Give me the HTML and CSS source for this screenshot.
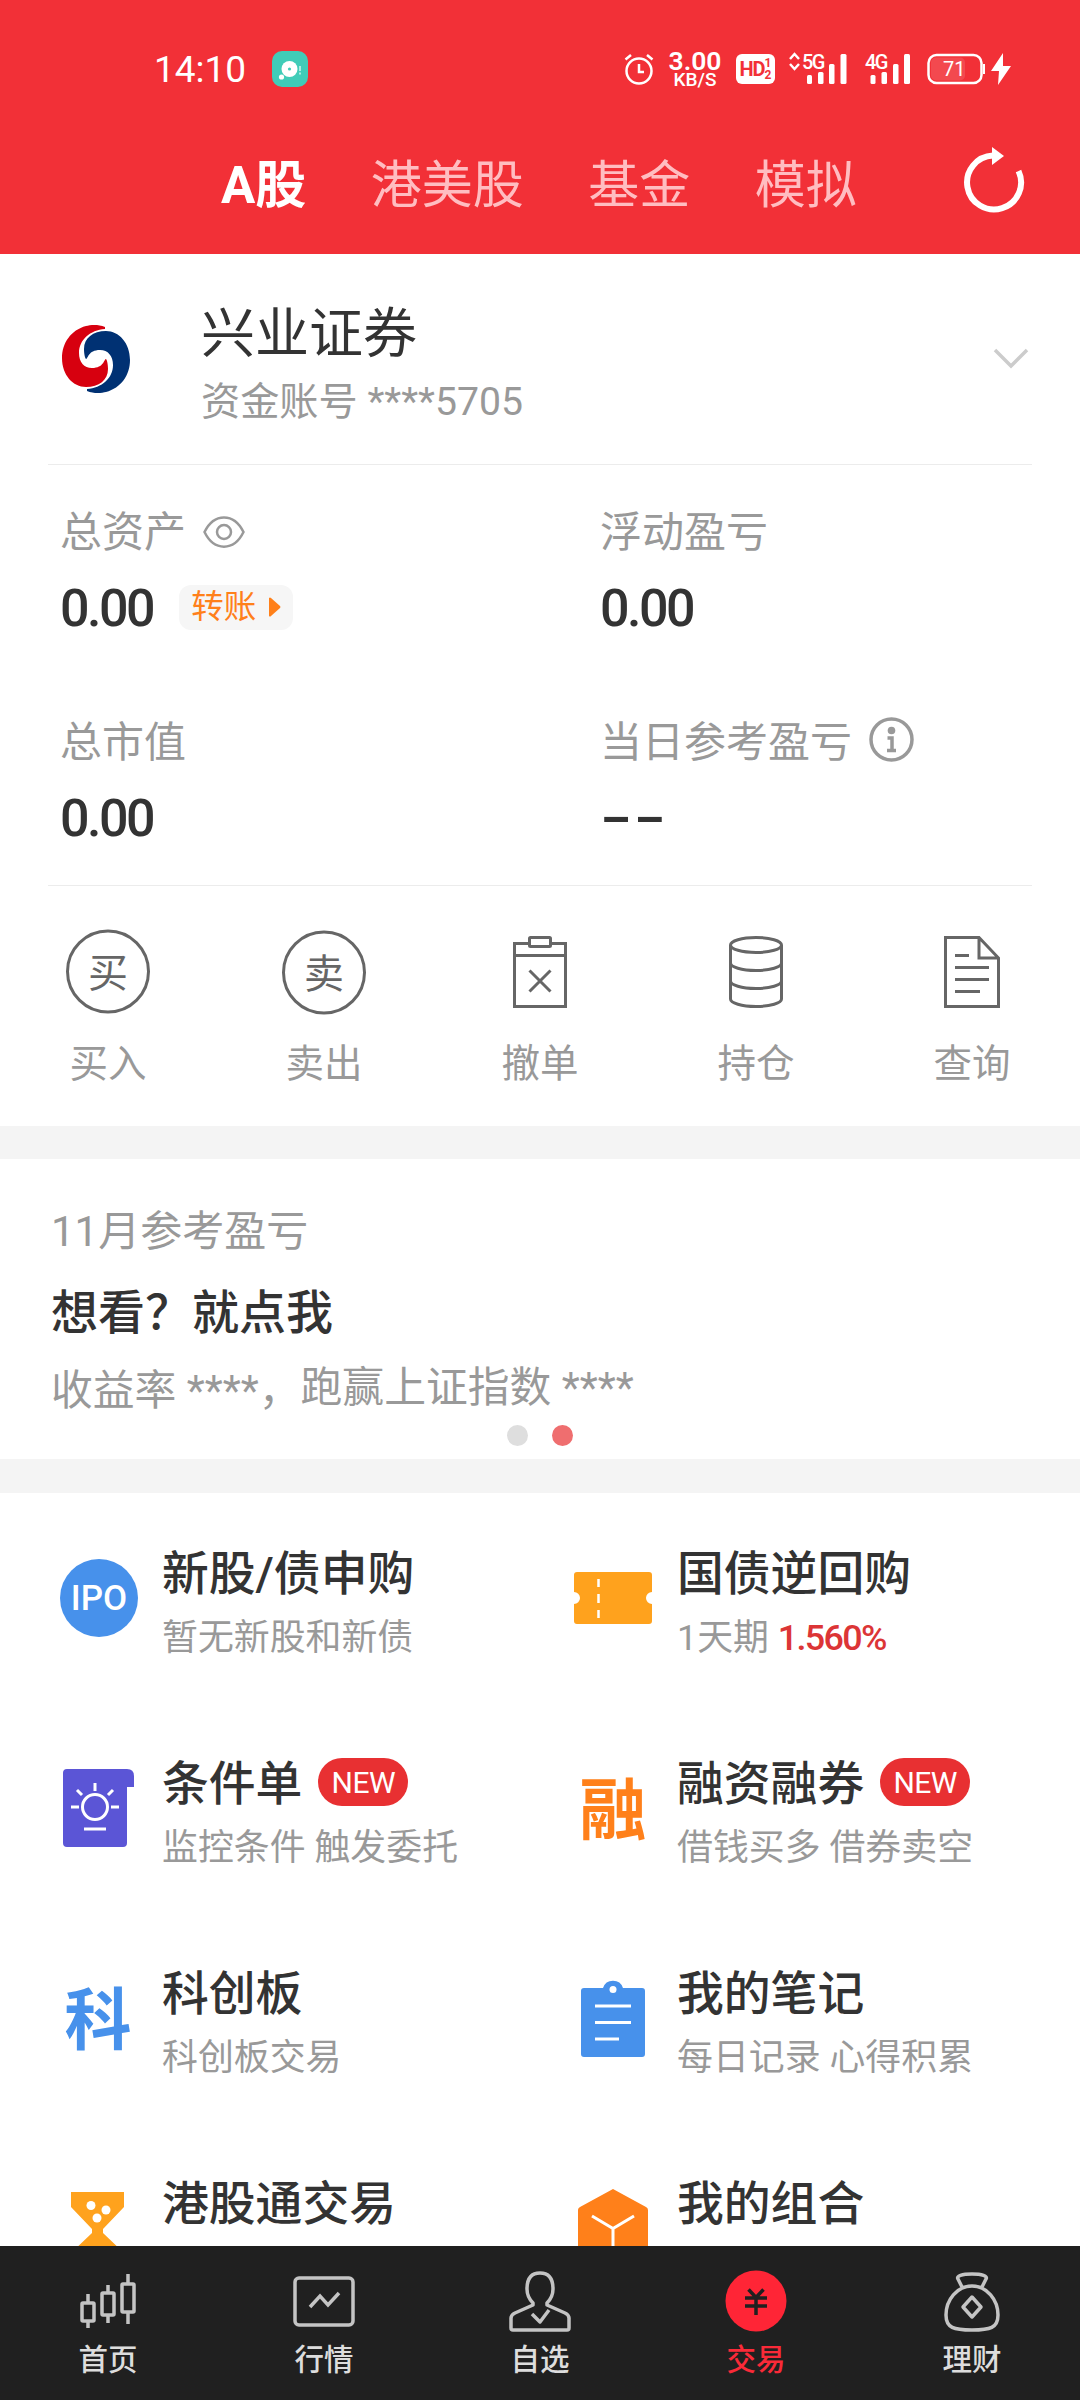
FILE: index.html
```html
<!DOCTYPE html>
<html lang="zh-CN">
<head>
    <meta charset="UTF-8">
    <meta name="viewport" content="width=device-width, initial-scale=1.0">
    <title>交易</title>
    <link rel="stylesheet" href="styles.css">
</head>
<body>
    <div class="container">
        <div class="header">
            <div class="status-bar">
                <span class="time">14:10</span>
                <svg class="app-icon" width="36" height="36" viewBox="0 0 36 36">
                    <rect width="36" height="36" rx="10" fill="#40ccb8"/>
                    <circle cx="17.5" cy="18" r="8" fill="#fff"/>
                    <circle cx="17.5" cy="18" r="1.6" fill="#40ccb8"/>
                    <circle cx="9.5" cy="26" r="2.6" fill="#fff"/>
                    <path d="M28 15v5M28 21.500v2" stroke="#d5f5ef" stroke-width="1.500"/>
                </svg>
                <svg class="alarm" width="30" height="32" viewBox="0 0 30 32" fill="none" stroke="#fff" stroke-width="2.500">
                    <circle cx="15" cy="18" r="12.500"/>
                    <path d="M1.500 6.500L7 2M28.500 6.500L23 2M15 11v8h5"/>
                </svg>
                <div class="speed"><b>3.00</b><span>KB/S</span></div>
                <div class="hd"><span>HD</span><i>1<br>2</i></div>
                <svg class="signal-5g" width="58" height="32" viewBox="0 0 58 32" fill="#fff">
                    <path d="M0 6l4.500-5L9 6M0 11l4.500 5L9 11" fill="none" stroke="#fff" stroke-width="2.500"/>
                    <text x="12" y="16" class="net">5G</text>
                    <rect x="17" y="22" width="5" height="9" rx="1.500"/>
                    <rect x="28" y="19" width="5.500" height="12" rx="1.500"/>
                    <rect x="39" y="11" width="5.500" height="20" rx="1.500"/>
                    <rect x="50.500" y="1" width="6" height="30" rx="1.500"/>
                </svg>
                <svg class="signal-4g" width="46" height="32" viewBox="0 0 46 32" fill="#fff">
                    <text x="0" y="16" class="net">4G</text>
                    <rect x="5.500" y="22" width="5" height="9" rx="1.500"/>
                    <rect x="16.500" y="19" width="5.500" height="12" rx="1.500"/>
                    <rect x="28" y="11" width="5.500" height="20" rx="1.500"/>
                    <rect x="39" y="1" width="6" height="30" rx="1.500"/>
                </svg>
                <svg class="battery" width="84" height="32" viewBox="0 0 84 32">
                    <rect x="1.500" y="2" width="53" height="28" rx="8" fill="none" stroke="#fff" stroke-width="2.500"/>
                    <rect x="4" y="4.500" width="34" height="23" rx="5" fill="#fff" opacity=".12"/>
                    <path d="M56 11h2v10h-2z" fill="#fff"/>
                    <text x="16" y="23" class="level">71</text>
                    <path d="M76 0L64 18h8l-1 14 13-19h-8z" fill="#fff"/>
                </svg>
            </div>
            <div class="tabs">
                <a class="tab active">A股</a>
                <a class="tab">港美股</a>
                <a class="tab">基金</a>
                <a class="tab">模拟</a>
                <svg class="refresh" width="62" height="70" viewBox="0 0 62 70">
                    <path d="M31 8.500A27 27 0 1 0 56.500 24" fill="none" stroke="#fff" stroke-width="6"/>
                    <path d="M30 0L42 9 30 18z" fill="#fff"/>
                </svg>
            </div>
        </div>

        <div class="account">
            <svg class="logo" width="68" height="68" viewBox="0 0 68 68">
                <path d="M43 2C36-1 28 0 24 1 9 5 0 18 0 33c0 17 11 29 24 29s22-7 22-18c0-5-1-9-2-10-2 0-2 9-14 9-8 0-13-6-13-15C17 15 28 5 43 4z" fill="#d7000f"/>
                <path d="M43 2C36-1 28 0 24 1 9 5 0 18 0 33c0 17 11 29 24 29s22-7 22-18c0-5-1-9-2-10-2 0-2 9-14 9-8 0-13-6-13-15C17 15 28 5 43 4z" fill="#003173" transform="rotate(180 34 34)"/>
            </svg>
            <div class="account-info">
                <div class="broker">兴业证券</div>
                <div class="number">资金账号 ****5705</div>
            </div>
            <svg width="36" height="22" viewBox="0 0 36 22"><path d="M2 2l16 16L34 2" fill="none" stroke="#ccc" stroke-width="3.500"/></svg>
        </div>

        <div class="assets">
            <div class="asset">
                <div class="label">总资产
                    <svg class="eye" width="42" height="32" viewBox="0 0 42 32" fill="none" stroke="#999" stroke-width="2.500"><path d="M1.500 16C11-3.500 31-3.500 40.500 16 31 35.500 11 35.500 1.500 16z"/><circle cx="21" cy="16" r="7"/></svg>
                </div>
                <div class="value">0.00
                    <span class="transfer">转账<svg width="12" height="20" viewBox="0 0 12 20"><path d="M0 1q1-1 2 0l9 8q1 1 0 2l-9 8q-1 1-2 0z" fill="#ff801a"/></svg></span>
                </div>
            </div>
            <div class="asset">
                <div class="label">浮动盈亏</div>
                <div class="value">0.00</div>
            </div>
            <div class="asset">
                <div class="label">总市值</div>
                <div class="value">0.00</div>
            </div>
            <div class="asset">
                <div class="label">当日参考盈亏
                    <svg class="info" width="45" height="45" viewBox="0 0 45 45"><circle cx="22.500" cy="22.500" r="20.500" fill="none" stroke="#999" stroke-width="3.500"/><circle cx="22.500" cy="13.500" r="3.800" fill="#999"/><path d="M18.500 21h4.500v12M18 33.500h9" fill="none" stroke="#999" stroke-width="3.500"/></svg>
                </div>
                <div class="value dashes">--</div>
            </div>
        </div>

        <div class="actions">
            <a class="action">
                <svg width="86" height="86" viewBox="0 0 86 86"><circle cx="43" cy="42.500" r="40.500" fill="none" stroke="#666" stroke-width="3"/><text x="43" y="58" class="glyph">买</text></svg>
                <span>买入</span>
            </a>
            <a class="action">
                <svg width="86" height="86" viewBox="0 0 86 86"><circle cx="43" cy="43.500" r="40.500" fill="none" stroke="#666" stroke-width="3"/><text x="43" y="58.500" class="glyph">卖</text></svg>
                <span>卖出</span>
            </a>
            <a class="action">
                <svg width="54" height="72" viewBox="0 0 54 72" fill="none" stroke="#666" stroke-width="3"><path d="M16 7.500H1.500v63h51v-63H38M1.500 19.500h51"/><rect x="16.500" y="1.500" width="21" height="9" rx="1"/><path d="M16.500 34.500l21 21M37.500 34.500l-21 21"/></svg>
                <span>撤单</span>
            </a>
            <a class="action">
                <svg width="54" height="72" viewBox="0 0 54 72" fill="none" stroke="#666" stroke-width="3"><ellipse cx="27" cy="9" rx="25.500" ry="7.500"/><path d="M1.500 9v54c0 4 11 7.500 25.500 7.500s25.500-3.500 25.500-7.500V9M1.500 27c0 4 11 7.500 25.500 7.500S52.500 31 52.500 27M1.500 45c0 4 11 7.500 25.500 7.500S52.500 49 52.500 45"/></svg>
                <span>持仓</span>
            </a>
            <a class="action">
                <svg width="56" height="72" viewBox="0 0 56 72" fill="none" stroke="#666" stroke-width="3"><path d="M1.500 1.500H35L54.500 22v48.500h-53zM35 1.500V22h19.500M11 19.500h14M11 31.500h34M11 43.500h34M11 55.500h25"/></svg>
                <span>查询</span>
            </a>
        </div>

        <div class="banner">
            <div class="banner-title">11月参考盈亏</div>
            <div class="banner-main">想看？就点我</div>
            <div class="banner-text"><span>收益率 ****，</span><span class="raised">跑赢上证指数 ****</span></div>
            <div class="dots"><i></i><i class="on"></i></div>
        </div>

        <div class="features">
            <div class="feature">
                <div class="icon"><div class="ipo">IPO</div></div>
                <div class="feature-text"><h3>新股/债申购</h3><p>暂无新股和新债</p></div>
            </div>
            <div class="feature">
                <div class="icon">
                    <svg width="78" height="52" viewBox="0 0 78 52"><path d="M3 0h72q3 0 3 3v17a6 6 0 0 0 0 12v17q0 3-3 3H3q-3 0-3-3V32a6 6 0 0 0 0-12V3q0-3 3-3z" fill="#ffa21d"/><path d="M24.500 7v8M24.500 22v9M24.500 38v8" stroke="#fff" stroke-width="2.500"/></svg>
                </div>
                <div class="feature-text"><h3>国债逆回购</h3><p>1天期 <em>1.560%</em></p></div>
            </div>
            <div class="feature">
                <div class="icon">
                    <svg width="71" height="78" viewBox="0 0 71 78"><path d="M4 0h60q7 0 7 7v11h-7v56q0 4-4 4H4q-4 0-4-4V4q0-4 4-4z" fill="#5b55d6"/><g fill="none" stroke="#fff" stroke-width="3"><circle cx="32" cy="38" r="12.500"/><path d="M32 14v8M14 21l5 5M50 21l-5 5M8 38h8M48 38h8M21 60h22"/></g></svg>
                </div>
                <div class="feature-text"><h3>条件单<span class="new">NEW</span></h3><p>监控条件 触发委托</p></div>
            </div>
            <div class="feature">
                <div class="icon char orange">融</div>
                <div class="feature-text"><h3>融资融券<span class="new">NEW</span></h3><p>借钱买多 借券卖空</p></div>
            </div>
            <div class="feature">
                <div class="icon char blue">科</div>
                <div class="feature-text"><h3>科创板</h3><p>科创板交易</p></div>
            </div>
            <div class="feature">
                <div class="icon">
                    <svg width="64" height="78" viewBox="0 0 64 78"><path d="M3 9h19a10.500 10.500 0 0 1 20 0h19q3 0 3 3v63q0 3-3 3H3q-3 0-3-3V12q0-3 3-3z" fill="#4791eb"/><circle cx="32" cy="10.500" r="3.500" fill="#fff"/><path d="M14 27h36M14 43.500h36M14 60h24" stroke="#fff" stroke-width="3"/></svg>
                </div>
                <div class="feature-text"><h3>我的笔记</h3><p>每日记录 心得积累</p></div>
            </div>
            <div class="feature">
                <div class="icon">
                    <svg width="54" height="72" viewBox="0 0 54 72"><path d="M0 0h53v15L32 37v4l21 20v11H0V61l21-20v-4L0 15z" fill="#ffa21d"/><g fill="#fff"><circle cx="20" cy="13.500" r="4.500"/><circle cx="35" cy="18" r="4.500"/><circle cx="26" cy="26" r="4.500"/></g></svg>
                </div>
                <div class="feature-text"><h3>港股通交易</h3></div>
            </div>
            <div class="feature">
                <div class="icon">
                    <svg width="70" height="78" viewBox="0 0 70 78"><path d="M35 0l33 18q2 1 2 3v36q0 2-2 3L35 78 2 60q-2-1-2-3V21q0-2 2-3z" fill="#ff801a"/><path d="M14 27l21 12.500L56 27M35 39v28" fill="none" stroke="#fff" stroke-width="3"/></svg>
                </div>
                <div class="feature-text"><h3>我的组合</h3></div>
            </div>
        </div>

        <div class="navbar">
            <a class="nav-item">
                <svg width="62" height="62" viewBox="0 0 62 62" fill="none" stroke="#c4c4c4" stroke-width="3.500"><rect x="5" y="33" width="12" height="18" rx="1"/><rect x="25" y="23" width="12" height="22" rx="1"/><rect x="45" y="14" width="12" height="28" rx="1"/><path d="M11 24v9M11 51v7M31 15v8M31 45v8M51 4v10M51 42v12"/></svg>
                <span>首页</span>
            </a>
            <a class="nav-item">
                <svg width="62" height="62" viewBox="0 0 62 62" fill="none" stroke="#c4c4c4" stroke-width="3.500"><rect x="2" y="8" width="58" height="47" rx="4"/><path d="M17 37l10-11 8 9 11-12"/></svg>
                <span>行情</span>
            </a>
            <a class="nav-item">
                <svg width="62" height="62" viewBox="0 0 62 62" fill="none" stroke="#c4c4c4" stroke-width="3.500" stroke-linejoin="round"><path d="M24 33c-4-4-6-8-6-14C18 8 23 3 31 3s13 5 13 16c0 6-2 10-6 14v2l18 8q4 2 4 5v10q0 2-2 2H4q-2 0-2-2V48q0-3 4-5l18-8z"/><path d="M23 44l8 8 9-12"/></svg>
                <span>自选</span>
            </a>
            <a class="nav-item active">
                <svg width="62" height="62" viewBox="0 0 62 62"><circle cx="31" cy="31" r="30.500" fill="#ff2536"/><path d="M23.500 19.500l7.500 8 7.500-8M20 28h22M20 36h22M31 27v18" fill="none" stroke="#202020" stroke-width="3.500"/></svg>
                <span>交易</span>
            </a>
            <a class="nav-item">
                <svg width="62" height="62" viewBox="0 0 62 62" fill="none" stroke="#c4c4c4" stroke-width="3.500" stroke-linejoin="round"><path d="M21 17l-4-8c-2-3 4-5 14-5s16 2 14 5l-4 8M31 16C16 16 5 30 5 45c0 13 8 15 26 15s26-2 26-15C57 30 46 16 31 16z"/><path d="M31 27l9 10-9 10-9-10z"/></svg>
                <span>理财</span>
            </a>
        </div>
    </div>
</body>
</html>
```
FILE: styles.css
```css
* {
    box-sizing: border-box;
}

body {
    font-family: Roboto, "Noto Sans CJK SC", sans-serif;
    margin: 0;
    padding: 0;
    background-color: #fff;
    color: #333;
}

.container {
    width: 1080px;
    height: 2400px;
    display: flex;
    flex-direction: column;
    overflow: hidden;
}

svg {
    display: block;
    flex-shrink: 0;
    overflow: visible;
}

/* Red top area */
.header {
    height: 254px;
    background-color: #f23037;
    color: #fff;
    flex-shrink: 0;
}

.status-bar {
    height: 138px;
    padding: 0 68px 0 154px;
    display: flex;
    align-items: center;
}

.time {
    font-size: 37px;
    width: 118px;
}

.alarm {
    margin-left: 316px;
}

.speed {
    width: 52px;
    margin-left: 15px;
    display: flex;
    flex-direction: column;
    align-items: center;
    font-weight: 500;
}

.speed b {
    font-size: 26.500px;
    line-height: 20px;
    font-weight: 600;
}

.speed span {
    font-size: 19px;
    line-height: 17px;
}

.hd {
    width: 39px;
    height: 30px;
    margin-left: 15px;
    background-color: #fff;
    border-radius: 6px;
    color: #f23037;
    display: flex;
    align-items: center;
    justify-content: center;
    font-weight: 700;
}

.hd span {
    font-size: 20px;
    letter-spacing: -1px;
}

.hd i {
    font-size: 12px;
    line-height: 12px;
    font-style: normal;
}

.signal-5g {
    margin-left: 15px;
}

.signal-4g {
    margin-left: 17px;
}

.battery {
    margin-left: 16px;
}

.net {
    font-size: 20px;
    letter-spacing: -1.500px;
    font-weight: 500;
}

.level {
    font-size: 20px;
    fill: #fff;
}

.tabs {
    display: flex;
    align-items: center;
    height: 90px;
    padding-left: 221px;
}

.tab {
    font-size: 51px;
    line-height: 90px;
    padding-top: 5px;
    color: #ffbdc1;
    margin-right: 64.500px;
}

.tab.active {
    color: #fff;
    font-weight: 700;
}

.refresh {
    margin-left: 41px;
    margin-bottom: 2px;
}

/* Account */
.account {
    display: flex;
    align-items: center;
    height: 211px;
    margin: 0 48px;
    padding: 0 3px 0 14px;
    border-bottom: 1px solid #ececec;
    flex-shrink: 0;
}

.account-info {
    flex-grow: 1;
    margin-left: 71px;
    padding-top: 13px;
}

.broker {
    font-size: 54px;
    line-height: 72px;
}

.number {
    font-size: 39.200px;
    line-height: 62px;
    color: #999;
}

.assets {
    display: grid;
    grid-template-columns: 540px 540px;
    grid-auto-rows: 210px;
    height: 420px;
    flex-shrink: 0;
}

.asset {
    padding: 32px 0 0 60px;
}

.label {
    display: flex;
    align-items: center;
    font-size: 42px;
    line-height: 72px;
    height: 72px;
    color: #999;
}

.eye {
    margin-left: 17px;
    margin-bottom: 2px;
}

.info {
    margin-left: 17px;
    margin-bottom: 7px;
}

.value {
    display: flex;
    align-items: center;
    font-size: 52px;
    font-weight: 500;
    height: 80px;
    line-height: 80px;
    letter-spacing: -2.500px;
}

/* Wide placeholder dashes */
.dashes {
    padding-bottom: 18px;
    font-family: "Noto Sans CJK SC", sans-serif;
    font-size: 60px;
    letter-spacing: 1px;
    transform: scaleX(1.5);
    transform-origin: left;
}

.transfer {
    display: flex;
    align-items: center;
    width: 114px;
    height: 45px;
    margin-left: 26px;
    margin-bottom: 4px;
    padding-left: 12px;
    border-radius: 12px;
    background-color: #f6f6f6;
    color: #ff801a;
    font-size: 32.500px;
    font-weight: 400;
    line-height: 47px;
    letter-spacing: 0;
}

.transfer svg {
    margin-left: 13px;
}

/* Trade buttons */
.actions {
    display: flex;
    height: 241px;
    flex-shrink: 0;
    position: relative;
}

.actions::before {
    content: "";
    position: absolute;
    left: 48px;
    right: 48px;
    top: 0;
    height: 1px;
    background-color: #ececec;
}

.action {
    width: 216px;
    padding-top: 44px;
    display: flex;
    flex-direction: column;
    align-items: center;
}

.action svg {
    height: 86px;
}

.action span {
    margin-top: 21px;
    font-size: 38.500px;
    line-height: 56px;
    color: #999;
}

.glyph {
    font-size: 40px;
    fill: #666;
    text-anchor: middle;
}

/* Monthly result card */
.banner {
    height: 367px;
    border-top: 33px solid #f4f4f4;
    border-bottom: 34px solid #f4f4f4;
    padding: 45px 51px 0;
    flex-shrink: 0;
}

.banner-title {
    font-size: 42px;
    line-height: 56px;
    color: #999;
}

.banner-main {
    margin-top: 15px;
    font-size: 47px;
    line-height: 76px;
    font-weight: 500;
}

.banner-text {
    display: flex;
    margin-top: 12px;
    font-size: 41.800px;
    line-height: 56px;
    height: 56px;
    color: #999;
}

.raised {
    margin-top: -3px;
}

.dots {
    display: flex;
    justify-content: center;
    gap: 24px;
    margin-top: 6px;
}

.dots i {
    width: 21px;
    height: 21px;
    border-radius: 50%;
    background-color: #dedede;
}

.dots .on {
    background-color: #ef6e6f;
}

.features {
    display: grid;
    grid-template-columns: 515px 565px;
    grid-auto-rows: 210px;
    flex: 1;
    min-height: 0;
    overflow: hidden;
}

.feature {
    display: flex;
    align-items: center;
    padding-left: 34px;
}

.icon {
    width: 128px;
    display: flex;
    justify-content: center;
}

.char {
    padding-top: 6px;
    font-size: 67px;
    line-height: 80px;
    font-weight: 700;
}

.orange {
    color: #ff801a;
}

.blue {
    color: #4791eb;
}

.ipo {
    width: 78px;
    height: 78px;
    margin-left: 1px;
    padding-left: 1px;
    border-radius: 50%;
    background-color: #4791eb;
    color: #fff;
    font-size: 35px;
    line-height: 80px;
    font-weight: 500;
    text-align: center;
}

.feature-text {
    align-self: flex-start;
    padding-top: 49px;
}

.feature-text h3 {
    display: flex;
    align-items: center;
    margin: 0;
    font-size: 46.800px;
    line-height: 64px;
    font-weight: 500;
}

.feature-text p {
    margin: 0;
    font-size: 35.900px;
    line-height: 64px;
    color: #999;
}

.feature-text em {
    font-style: normal;
    font-weight: 500;
    letter-spacing: -1.700px;
    color: #dc3536;
}

.new {
    width: 90px;
    height: 48px;
    margin-left: 16px;
    margin-bottom: 5px;
    border-radius: 24px;
    background-color: #e83032;
    color: #fff;
    font-size: 30px;
    line-height: 49px;
    font-weight: 400;
    letter-spacing: -.500px;
    text-align: center;
}

/* Bottom navigation */
.navbar {
    display: flex;
    height: 154px;
    background-color: #202020;
    flex-shrink: 0;
}

.nav-item {
    width: 216px;
    padding-top: 24px;
    display: flex;
    flex-direction: column;
    align-items: center;
    color: #ddd;
}

.nav-item span {
    margin-top: 8px;
    font-size: 29.500px;
    line-height: 40px;
    font-weight: 500;
}

.nav-item.active {
    color: #fa2a38;
}
```
